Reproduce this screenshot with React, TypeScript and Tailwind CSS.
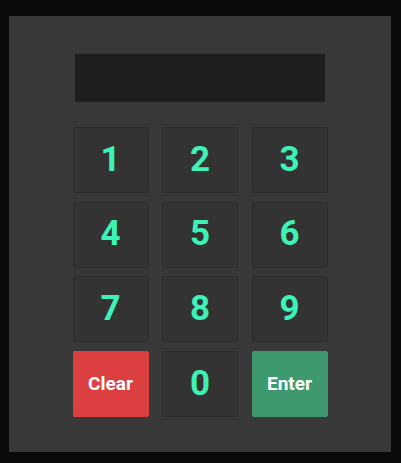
import { useState } from "react";

const keys = ["1", "2", "3", "4", "5", "6", "7", "8", "9"];

export default function App() {
  const [code, setCode] = useState("");

  const press = (k: string) => setCode((c) => (c.length < 8 ? c + k : c));

  return (
    <div
      className="min-h-[463px] w-full bg-[#0b0a08] pt-4 pb-[11px] px-[9px]"
      style={{ fontFamily: "Roboto, 'Liberation Sans', sans-serif" }}
    >
      <div className="flex h-[436px] w-[382px] flex-col items-center bg-[#383838] pt-[38px]">
        <div className="flex h-12 w-[250px] items-center justify-center bg-[#1e1e1e] text-2xl font-bold tracking-widest text-[#3df2b6]">
          {code}
        </div>

        <div className="mt-[25px] grid grid-cols-[76px_76px_76px] gap-x-[13.5px] gap-y-[8.7px]">
          {keys.map((k) => (
            <button
              key={k}
              type="button"
              onClick={() => press(k)}
              className="flex h-[66px] items-center justify-center rounded-[2px] border border-[#2c2c2c] bg-[#333333] text-[35px] font-bold text-[#3df2b6]"
            >
              {k}
            </button>
          ))}
          <button
            type="button"
            onClick={() => setCode("")}
            className="flex h-[66px] items-center justify-center rounded-[2px] bg-[#dc3f3f] text-[19px] font-bold text-white"
          >
            Clear
          </button>
          <button
            type="button"
            onClick={() => press("0")}
            className="flex h-[66px] items-center justify-center rounded-[2px] border border-[#2c2c2c] bg-[#333333] text-[35px] font-bold text-[#3df2b6]"
          >
            0
          </button>
          <button
            type="button"
            className="flex h-[66px] items-center justify-center rounded-[2px] bg-[#3e9a6e] text-[19px] font-bold text-white"
          >
            Enter
          </button>
        </div>
      </div>
    </div>
  );
}
